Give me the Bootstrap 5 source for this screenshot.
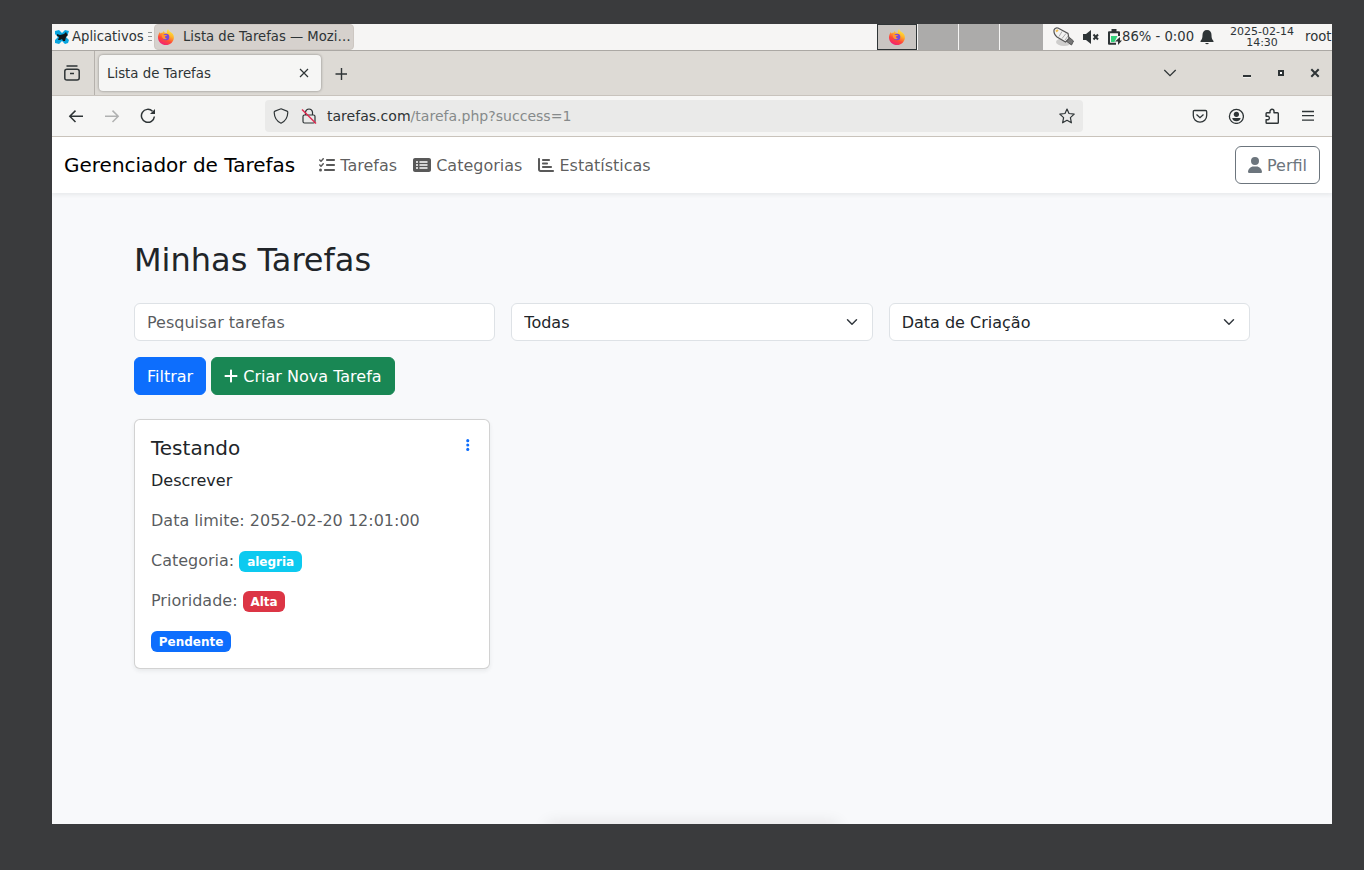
<!DOCTYPE html>
<html lang="pt-BR">
<head>
<meta charset="utf-8">
<meta name="viewport" content="width=device-width, initial-scale=1">
<title>Lista de Tarefas</title>
<link href="https://cdn.jsdelivr.net/npm/bootstrap@5.3.0/dist/css/bootstrap.min.css" rel="stylesheet">
<style>
body { font-family: "DejaVu Sans", sans-serif; background: #3a3b3d; height: 870px; overflow: hidden; padding: 24px 32px 0 52px; }
svg { display: block; flex: none; }
.screen { width: 1280px; height: 800px; background: #f8f9fb; }
.chrome-text { color: #2e3436; font-size: 13.33px; line-height: 1; white-space: nowrap; }
/* desktop panel */
.panel-bar { height: 27px; background: #f6f5f4; border-bottom: 1px solid #aba8a4; padding-left: 2px; font-size: 13.2px; }
.app-label { width: 76px; padding-left: 2px; }
.task-btn { width: 200px; height: 26px; margin-left: 2px; background: #d6d1cd; border: 1px solid #cdc7c2; border-radius: 4px; padding-left: 3px; }
.task-btn span { margin-left: 9px; }
.pager > div { width: 41px; height: 26px; background: #acabaa; border-right: 1px solid #f6f5f4; }
.pager > div.current { width: 41px; background: #c9c5c2; box-shadow: inset 0 0 0 1px #2e3436; margin-right: 0; border-right: 1px solid #f6f5f4; background-clip: padding-box; }
.pager > div:last-child { width: 43px; border: 0; }
.clock { width: 66px; font-size: 11px; line-height: 11px; margin-left: 15px; }
/* browser */
.tab-bar { height: 45px; background: #dddad5; border-bottom: 1px solid #c8c3bd; }
.tab-recent { width: 43px; height: 44px; border-right: 1px solid #b5b1ac; padding-left: 12px; }
.tab-item { width: 222px; height: 36px; margin-left: 4px; background: #f6f6f5; border-radius: 4px; box-shadow: 0 0 3px rgba(0,0,0,.4); padding: 0 11px 0 8px; }
.tab-item span { padding-top: 2px; }
.tool-bar { height: 41px; background: #f6f6f5; border-bottom: 1px solid #cbc5bd; }
.url-box { width: 818px; height: 32px; margin-left: 109px; background: #eaeae9; border-radius: 4px; padding: 0 8px; font-size: 14.67px; }
.url-text { font-size: 14.05px; margin-left: 10px; }
.url-box .path { color: #868a8b; }
/* page */
.site-nav { height: 56px; z-index: 1; }
.site-nav .nav-link { color: rgba(0,0,0,.65); padding-top: 9px; padding-bottom: 7px; }
.fa { display: inline-block; height: 1em; vertical-align: -.125em; overflow: visible; fill: currentColor; }
.btn, .form-control, .form-select { padding-top: 7px; padding-bottom: 5px; }
.card-title { margin-bottom: 9px; }
.card-body > .badge { margin-bottom: -1px; }
.card .badge { padding-top: calc(.35em + 1px); padding-bottom: calc(.35em - 1px); }
.card-body { padding-bottom: 15px; }
.muted { color: rgba(33,37,41,.75); }
.form-control::placeholder { color: rgba(33,37,41,.75); }
.menu-dots { right: 19.500px; top: 15px; font-size: 14px; line-height: 21px; }
.dock-shadow { left: 495px; bottom: -11px; width: 291px; height: 11px; box-shadow: 0 0 16px rgba(30,20,0,.12); }
</style>
</head>
<body>
<svg width="0" height="0" class="position-absolute">
  <defs>
    <linearGradient id="ffBody" x1=".75" y1="0" x2=".25" y2="1"><stop offset="0" stop-color="#fff13f"/><stop offset=".35" stop-color="#ffb02a"/><stop offset=".65" stop-color="#ff4a35"/><stop offset="1" stop-color="#ef1a7e"/></linearGradient>
    <symbol id="firefox" viewBox="0 0 16 16">
      <path d="M10 .3c.9 1 1.200 1.700 1.700 2.200C14.500 3.800 16 6 15.900 8.700 15.700 12.800 12.300 16 8 16S0 12.600 0 8.400C0 6.200.8 4.100 2 2.900L2.300 4.600C3 3.900 4 3.500 5 3.600L5.500 2l1.400 1.700c1-.2 1.600.1 2.100.4C8.500 2.700 9 1.300 10 .3z" fill="url(#ffBody)"/>
      <circle cx="8" cy="8" r="3.300" fill="#7548df"/>
      <path d="M3.700 5.700c1-.7 2-.4 3 .2l2.200.1c.3.700-.7 1-1.700 1.300-.4 1.500.5 2.200 1.800 2-1.200 1.400-4 1.200-4.900-1z" fill="#ff9433"/>
    </symbol>
  </defs>
</svg>
<div class="screen d-flex flex-column position-relative overflow-hidden">
  <div class="panel-bar chrome-text d-flex align-items-center flex-shrink-0">
    <svg width="16" height="16" viewBox="0 0 16 16"><path d="M1 2l4-1 3 3 3-3 4 1-1 3-2 3 3 3-1 3-3 1-3-3-3 3-4-1v-3l3-3-3-3z" fill="#08a5df"/><path d="M3 5l3 1 4-1 2-2 1 2 1 1-2 2-1 4H9L8 10 6 11H4l1-3-2-1z" fill="#101719"/></svg>
    <span class="app-label">Aplicativos</span>
    <svg width="6" height="12" viewBox="0 0 6 12" stroke="#929695"><path d="M2 1.500h4M2 5.500h4M2 9.500h4"/></svg>
    <div class="task-btn d-flex align-items-center"><svg width="16" height="16"><use href="#firefox"/></svg><span>Lista de Tarefas — Mozi…</span></div>
    <div class="pager d-flex ms-auto">
      <div class="current d-flex align-items-center justify-content-center"><svg width="16" height="16"><use href="#firefox"/></svg></div><div></div><div></div><div></div>
    </div>
    <svg class="ms-2" width="24" height="22" viewBox="0 0 24 22"><ellipse cx="13" cy="16" rx="8" ry="4" fill="#000" opacity=".16"/><path d="M14.500 14.500l4-3 4 3.500-2 4z" fill="#777" stroke="#555"/><path d="M3 4Q4 1.200 7 2l10 5.500 1 5-3.500 3.500L6 11Q2.500 8 3 4z" fill="#f2f2f1" stroke="#555" stroke-width="1.200"/><path d="M8 10.500l3-5m0 7 4-5M14 14l3-4" fill="none" stroke="#aaa"/><path d="M5 5.500l2-1.500" stroke="#f0b94a" stroke-width="2"/></svg>
    <svg width="16" height="16" viewBox="0 0 16 16" style="margin-left:8px"><path d="M0 5h3l5-4v14l-5-4H0z" fill="#2e3436"/><path d="M10.500 5.500l4.500 5m0-5-4.500 5" stroke="#2e3436" stroke-width="2"/></svg>
    <svg class="ms-2" width="15" height="16" viewBox="0 0 15 16"><path d="M12 7V3.200H2V14.800h7" fill="none" stroke="#2e3436" stroke-width="2" stroke-linejoin="round"/><path d="M4.500 0h5v3h-5z" fill="#2e3436"/><path d="M4 7h6.500l-3 6H4z" fill="#33d17a"/><path d="M13 8l-5 4.500h3V16l4-4.500h-2z" fill="#2e3436"/></svg>
    <span style="width:78px">86% - 0:00</span>
    <svg width="14" height="16" viewBox="0 0 14 16"><path d="M7 1c3 0 4.500 2 4.500 5 0 3 .5 4.500 2 6V13H.5v-1c1.500-1.500 2-3 2-6 0-3 1.500-5 4.500-5zM5 14h4q-2 2.500-4 0z" fill="#2e3436"/></svg>
    <div class="clock text-center">2025-02-14<br>14:30</div>
    <span style="width:27px;margin-left:10px">root</span>
  </div>
  <div class="tab-bar chrome-text d-flex align-items-center flex-shrink-0">
    <div class="tab-recent d-flex align-items-center"><svg width="16" height="16" viewBox="0 0 16 16" fill="none" stroke="#2e3436" stroke-width="1.500"><path d="M2.500 1h11M3 4.200h10Q15.200 4.200 15.200 6.200V13q0 2-2.200 2H3Q.8 15 .8 13V6.200Q.8 4.200 3 4.200zM6 8.500h4"/></svg></div>
    <div class="tab-item d-flex align-items-center justify-content-between"><span>Lista de Tarefas</span><svg width="12" height="12" viewBox="0 0 12 12" stroke="#2e3436" stroke-width="1.200"><path d="M2 2l8 8m0-8-8 8"/></svg></div>
    <svg style="margin-left:14px" width="12" height="13" viewBox="0 0 12 13" stroke="#2e3436" stroke-width="1.400"><path d="M6.500 1v12M.500 7h12"/></svg>
    <div class="d-flex align-items-center ms-auto" style="margin-right:11px">
      <svg width="14" height="14" viewBox="0 0 14 14" fill="none" stroke="#2e3436" stroke-width="1.300"><path d="M1.300 4 7 9.700 12.700 4"/></svg>
      <svg style="margin-left:64px" width="12" height="12" viewBox="0 0 12 12"><path d="M2 8h8v2H2z" fill="#2e3436"/><path d="M2 10h8v1H2z" fill="#fff" opacity=".6"/></svg>
      <svg style="margin-left:23px" width="10" height="10" viewBox="0 0 10 10"><path d="M3 3h4v4H3z" fill="#fff" stroke="#2e3436" stroke-width="2"/></svg>
      <svg style="margin-left:23px" width="12" height="12" viewBox="0 0 12 12"><path d="M2.300 2.300l7.400 7.400m0-7.400-7.400 7.400" stroke="#2e3436" stroke-width="2"/></svg>
    </div>
  </div>
  <div class="tool-bar chrome-text d-flex align-items-center flex-shrink-0">
    <svg style="margin-left:16px" width="16" height="16" viewBox="0 0 16 16" fill="none" stroke="#2e3436" stroke-width="1.500"><path d="M15 8.300H1.800M7.500 2.600l-5.700 5.700 5.700 5.700"/></svg>
    <svg style="margin-left:20px" width="16" height="16" viewBox="0 0 16 16" fill="none" stroke="#b0b1b1" stroke-width="1.500"><path d="M1 8.300h13.200M8.500 2.600l5.700 5.700-5.700 5.700"/></svg>
    <svg style="margin-left:20px" width="16" height="16" viewBox="0 0 16 16" fill="none" stroke="#2e3436" stroke-width="1.500"><path d="M12.500 3.200A6.500 6.500 0 1 0 14.400 8.500"/><path d="M15 1v5h-5z" fill="#2e3436" stroke="none"/></svg>
    <div class="url-box d-flex align-items-center">
      <svg width="16" height="16" viewBox="0 0 16 16" fill="none" stroke="#2e3436" stroke-width="1.200"><path d="M8 .8l6 2.300q.9.400.8 1.500Q14.500 12.500 8 15.200 1.500 12.500 1.200 4.600 1.100 3.500 2 3.100z"/></svg>
      <svg style="margin-left:12px" width="16" height="16" viewBox="0 0 16 16" fill="none" stroke="#2e3436" stroke-width="1.200"><path d="M4.500 7V4Q5 1 8 1t3.500 3V7M3.500 7h9q1.500 0 1.500 1.500V13.500Q14 15 12.500 15h-9Q2 15 2 13.500V8.500Q2 7 3.500 7z"/><path d="M1 1.500l14 14" stroke="#e22850" stroke-width="1.400"/></svg>
      <span class="url-text">tarefas.com<span class="path">/tarefa.php?success=1</span></span>
      <svg class="ms-auto" width="16" height="16" viewBox="0 0 16 16" fill="none" stroke="#2e3436" stroke-width="1.200" stroke-linejoin="round"><path d="M8 1l2 4.500 5.200.6-3.800 3.500 1 5.200L8 12.300l-4.400 2.500 1-5.200L.8 6.100 6 5.500z"/></svg>
    </div>
    <div class="d-flex align-items-center ms-auto" style="gap:20px;margin-right:16px">
      <svg width="16" height="16" viewBox="0 0 16 16" fill="none" stroke="#2e3436" stroke-width="1.300"><path d="M2.500 2.500h11q1.200 0 1.200 1.200V7.500a6.700 6.700 0 0 1-13.400 0V3.700Q1.300 2.500 2.500 2.500zM4.500 6.500 8 9.700l3.500-3.200"/></svg>
      <svg width="16" height="16" viewBox="0 0 16 16"><circle cx="8.400" cy="8.400" r="7" fill="none" stroke="#2e3436" stroke-width="1.300"/><circle cx="8.400" cy="6.300" r="2.600" fill="#2e3436"/><path d="M4.200 10h8.400Q11.900 13.200 8.400 13.200T4.200 10z" fill="#2e3436"/></svg>
      <svg width="16" height="16" viewBox="0 0 16 16" fill="none" stroke="#2e3436" stroke-width="1.400" stroke-linejoin="round"><path d="M6 4.800V3.300a2 2 0 0 1 4 0v1.500h3.500q.8 0 .8.800V14.500q0 .8-.8.800H2.900q-.8 0-.8-.8v-2.700h2a1.900 1.900 0 0 0 0-3.600h-2V5.600q0-.8.800-.8z"/></svg>
      <svg width="16" height="16" viewBox="0 0 16 16" stroke="#2e3436" stroke-width="1.300"><path d="M2 3.500h12M2 7.700h12M2 12.200h12"/></svg>
    </div>
  </div>

  <nav class="site-nav navbar navbar-expand navbar-light bg-white shadow-sm flex-shrink-0">
    <div class="container-fluid">
      <a class="navbar-brand text-black" href="#">Gerenciador de Tarefas</a>
      <ul class="navbar-nav me-auto">
        <li class="nav-item"><a class="nav-link" href="#"><svg class="fa" viewBox="0 0 512 512"><path d="M152.100 38.200c9.900 8.900 10.700 24 1.800 33.900l-72 80c-4.400 4.900-10.600 7.800-17.200 7.900s-12.900-2.400-17.600-7L7 113c-9.300-9.400-9.300-24.600 0-34s24.600-9.400 33.900 0l22.100 22.100 55.100-61.200c8.900-9.900 24-10.700 33.900-1.800zm0 160c9.900 8.900 10.700 24 1.800 33.900l-72 80c-4.400 4.900-10.600 7.800-17.200 7.900s-12.900-2.400-17.600-7L7 273c-9.300-9.400-9.300-24.600 0-34s24.600-9.400 33.900 0l22.100 22.100 55.100-61.200c8.900-9.900 24-10.700 33.900-1.800zM224 96c0-17.700 14.300-32 32-32H480c17.700 0 32 14.300 32 32s-14.300 32-32 32H256c-17.700 0-32-14.300-32-32zm0 160c0-17.700 14.300-32 32-32H480c17.700 0 32 14.300 32 32s-14.300 32-32 32H256c-17.700 0-32-14.300-32-32zM160 416c0-17.700 14.300-32 32-32H480c17.700 0 32 14.300 32 32s-14.300 32-32 32H192c-17.700 0-32-14.300-32-32zM48 368a48 48 0 1 1 0 96 48 48 0 1 1 0-96z"/></svg> Tarefas</a></li>
        <li class="nav-item"><a class="nav-link" href="#"><svg class="fa" viewBox="0 0 576 512"><path fill-rule="evenodd" d="M0 96C0 60.700 28.700 32 64 32H512c35.300 0 64 28.700 64 64V416c0 35.300-28.700 64-64 64H64c-35.300 0-64-28.700-64-64V96zM128 288a32 32 0 1 0 0-64 32 32 0 1 0 0 64zm32-128a32 32 0 1 0-64 0 32 32 0 1 0 64 0zM128 384a32 32 0 1 0 0-64 32 32 0 1 0 0 64zm96-248c-13.300 0-24 10.700-24 24s10.700 24 24 24H448c13.300 0 24-10.700 24-24s-10.700-24-24-24H224zm0 96c-13.300 0-24 10.700-24 24s10.700 24 24 24H448c13.300 0 24-10.700 24-24s-10.700-24-24-24H224zm0 96c-13.300 0-24 10.700-24 24s10.700 24 24 24H448c13.300 0 24-10.700 24-24s-10.700-24-24-24H224z"/></svg> Categorias</a></li>
        <li class="nav-item"><a class="nav-link" href="#"><svg class="fa" viewBox="0 0 512 512"><path d="M32 32c17.700 0 32 14.300 32 32V400c0 8.800 7.200 16 16 16H480c17.700 0 32 14.300 32 32s-14.300 32-32 32H80c-44.200 0-80-35.800-80-80V64C0 46.300 14.300 32 32 32zm96 64c0-17.700 14.300-32 32-32l192 0c17.700 0 32 14.300 32 32s-14.300 32-32 32l-192 0c-17.700 0-32-14.300-32-32zm32 80H288c17.700 0 32 14.300 32 32s-14.300 32-32 32H160c-17.700 0-32-14.300-32-32s14.300-32 32-32zm0 112H416c17.700 0 32 14.300 32 32s-14.300 32-32 32H160c-17.700 0-32-14.300-32-32s14.300-32 32-32z"/></svg> Estatísticas</a></li>
      </ul>
      <a class="btn btn-outline-secondary" href="#"><svg class="fa" viewBox="0 0 448 512"><path d="M224 256A128 128 0 1 0 224 0a128 128 0 1 0 0 256zm-45.700 48C79.800 304 0 383.800 0 482.300C0 498.700 13.300 512 29.700 512H418.300c16.400 0 29.700-13.300 29.700-29.700C448 383.800 368.200 304 269.700 304H178.300z"/></svg> Perfil</a>
    </div>
  </nav>

  <main class="container mt-5">
    <h2 class="mb-4">Minhas Tarefas</h2>
    <form class="mb-4">
      <div class="row g-3">
        <div class="col-md-4"><input class="form-control" type="text" placeholder="Pesquisar tarefas"></div>
        <div class="col-md-4"><select class="form-select"><option>Todas</option></select></div>
        <div class="col-md-4"><select class="form-select"><option>Data de Criação</option></select></div>
        <div class="col-12">
          <button type="button" class="btn btn-primary">Filtrar</button>
          <a class="btn btn-success" href="#"><svg class="fa" viewBox="0 0 448 512"><path d="M256 80c0-17.700-14.300-32-32-32s-32 14.300-32 32V224H48c-17.700 0-32 14.300-32 32s14.300 32 32 32H192V432c0 17.700 14.300 32 32 32s32-14.300 32-32V288H400c17.700 0 32-14.300 32-32s-14.300-32-32-32H256V80z"/></svg> Criar Nova Tarefa</a>
        </div>
      </div>
    </form>
    <div class="row">
      <div class="col-md-4">
        <div class="card shadow-sm">
          <div class="card-body">
            <a class="menu-dots position-absolute text-primary" href="#" aria-label="Opções"><svg class="fa" viewBox="0 0 128 512"><circle cx="64" cy="96" r="56"/><circle cx="64" cy="256" r="56"/><circle cx="64" cy="416" r="56"/></svg></a>
            <h5 class="card-title">Testando</h5>
            <p class="card-text">Descrever</p>
            <p class="muted">Data limite: 2052-02-20 12:01:00</p>
            <p class="muted">Categoria: <span class="badge bg-info">alegria</span></p>
            <p class="muted">Prioridade: <span class="badge bg-danger">Alta</span></p>
            <span class="badge bg-primary">Pendente</span>
          </div>
        </div>
      </div>
    </div>
  </main>
  <div class="dock-shadow position-absolute"></div>
</div>
<script src="https://cdn.jsdelivr.net/npm/bootstrap@5.3.0/dist/js/bootstrap.bundle.min.js"></script>
</body>
</html>
